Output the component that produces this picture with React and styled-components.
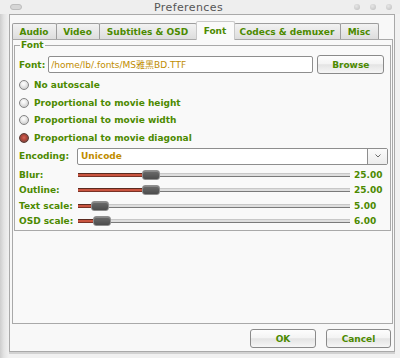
import React from "react"
import styled, { createGlobalStyle } from 'styled-components'

const GREEN = '#4c8a00'
const GOLD = '#c08c00'

const Global = createGlobalStyle`
    body {
        margin: 0;
        font-family: "DejaVu Sans", "Noto Sans CJK SC", sans-serif;
    }
`

const Page = styled.div`
    display: flex;
    flex-direction: column;
    width: 400px;
    height: 358px;
    background: #f1f1f1;
    overflow: hidden;
`

const TitleBar = styled.div`
    display: flex;
    align-items: center;
    height: 14px;
    background: #eeeeee;
`

const Pill = styled.div`
    width: 10px;
    height: 4px;
    margin: 0 1px 1px 10px;
    border: 1px solid #bdbdbd;
    border-radius: 3px;
    background: #d6d6d6;
`

const Title = styled.div`
    flex: 1;
    text-align: center;
    font-size: 11px;
    letter-spacing: 0.4px;
    color: #555;
    padding-top: 1px;
`

const Dots = styled.div`
    display: flex;
    gap: 10px;
    padding-right: 8px;
    margin-bottom: 1px;
`

const Dot = styled.div`
    width: 6px;
    height: 6px;
    border-radius: 50%;
    background: radial-gradient(circle at 40% 35%, #e6e6e6, #bdbdbd);
`

const Body = styled.div`
    display: flex;
    flex: 1;
    background: linear-gradient(to right, #cdcdcd 0, #e4e4e4 4px, #f1f1f1 9px);
`

const Side = styled.div`
    width: ${p => p.w}px;
`

const Window = styled.div`
    display: flex;
    flex-direction: column;
    width: 381px;
    height: 336px;
    border: 1px solid #a9a9a9;
    background: #f8f8f8;
    box-shadow: 0 2px 0 #d2d2d2;
    padding: 0 1px 0 2px;
`

const TabBar = styled.div`
    display: flex;
    align-items: flex-end;
    height: 24px;
`

const Tab = styled.div`
    position: relative;
    display: flex;
    align-items: center;
    justify-content: center;
    box-sizing: border-box;
    width: ${p => p.w}px;
    height: ${p => p.active ? 19 : 16}px;
    padding-right: 1px;
    margin-left: -1px;
    margin-bottom: ${p => p.active ? -1 : 0}px;
    border: 1px solid ${p => p.active ? '#c9c9c9' : '#9d9d9d'};
    border-bottom: none;
    border-radius: 2px 2px 0 0;
    background: ${p => p.active ? '#fafafa' : 'linear-gradient(#f2f2f2, #dddddd)'};
    z-index: ${p => p.active ? 1 : 0};
    font-size: 9px;
    font-weight: bold;
    white-space: nowrap;
    color: ${GREEN};
    &:first-child {
        margin-left: 0;
    }
`

const Panel = styled.div`
    height: 283px;
    border: 1px solid #a9a9a9;
    background: #f9f9f9;
    padding: 0 1px;
`

const Group = styled.fieldset`
    margin: 0;
    padding: 0 2px 0 4px;
    border: 1px solid #a9a9a9;
    min-width: 0;
`

const Legend = styled.legend`
    padding: 0 1px;
    margin-left: 1px;
    font-size: 9px;
    line-height: 10px;
    font-weight: bold;
    color: ${GREEN};
`

const FontRow = styled.div`
    display: flex;
    align-items: center;
    height: 19px;
    margin-top: 5px;
    gap: 3px;
`

const Label = styled.span`
    font-size: 9px;
    font-weight: bold;
    color: ${GREEN};
    white-space: nowrap;
`

const PathInput = styled.input`
    width: 265px;
    height: 17px;
    box-sizing: border-box;
    margin: 0;
    padding: 0 2px;
    border: 1px solid #8e8e8e;
    border-radius: 2px;
    background: #fff;
    font-family: "DejaVu Sans", "Noto Sans CJK SC", sans-serif;
    font-size: 9px;
    color: ${GOLD};
    outline: none;
`

const Button = styled.button`
    width: ${p => p.w}px;
    height: 19px;
    margin: 0;
    padding: 0;
    border: 1px solid #8a8a8a;
    border-radius: 3px;
    background: linear-gradient(#fdfdfd, #f4f4f4 44%, #e4e4e4 52%, #f6f6f6);
    font-family: "DejaVu Sans", sans-serif;
    font-size: 9px;
    font-weight: bold;
    color: ${GREEN};
    margin-left: ${p => p.ml || 0}px;
`

const Radios = styled.div`
    display: flex;
    flex-direction: column;
    margin-top: 2px;
`

const RadioRow = styled.div`
    display: flex;
    align-items: center;
    gap: 5px;
    height: 17.7px;
`

const RadioDot = styled.div`
    width: 10px;
    height: 10px;
    box-sizing: border-box;
    border-radius: 50%;
    border: 1px solid ${p => p.on ? '#5c3a34' : '#858585'};
    background: ${p => p.on
        ? 'radial-gradient(circle at 50% 45%, #d0685a 0, #b4463a 2.5px, #8a4a40 4px)'
        : 'radial-gradient(circle at 45% 35%, #ffffff 0, #f0f0f0 2px, #d2d2d2 5px)'};
`

const Grid = styled.div`
    display: grid;
    grid-template-columns: 58px 1fr 34px;
    grid-template-rows: 19px repeat(4, 15.5px);
    align-items: center;
    margin-top: 1px;
    padding-bottom: 1px;
`

const Combo = styled.div`
    grid-column: 2 / 4;
    display: flex;
    height: 17px;
    box-sizing: border-box;
    border: 1px solid #8e8e8e;
    border-radius: 2px;
    background: #fff;
    align-self: start;
`

const ComboText = styled.div`
    flex: 1;
    display: flex;
    align-items: center;
    padding-left: 3px;
    font-size: 9px;
    font-weight: bold;
    color: ${GOLD};
`

const ComboArrow = styled.div`
    width: 19px;
    display: flex;
    align-items: center;
    justify-content: center;
    border-left: 1px solid #8e8e8e;
    background: linear-gradient(#fbfbfb, #ececec);
`

const EncLabel = styled(Label)`
    align-self: start;
    line-height: 17px;
`

const Track = styled.div`
    position: relative;
    height: 4px;
    margin: 0 4px 0 1px;
    box-sizing: border-box;
    background: #dedede;
    border-bottom: 1px solid #7a7a7a;
    border-top: 1px solid #c8c8c8;
`

const Fill = styled.div`
    position: absolute;
    left: 0;
    top: -1px;
    height: 4px;
    box-sizing: border-box;
    background: #c9543f;
    border-top: 1px solid #5a2a20;
    border-bottom: 1px solid #7a3226;
`

const Handle = styled.div`
    position: absolute;
    top: -4px;
    width: 18px;
    height: 10px;
    box-sizing: border-box;
    border: 1px solid #8f8f8f;
    border-radius: 3px;
    background: linear-gradient(#6c6c6c, #4c4c4c);
    box-shadow: inset 0 1px 0 #888;
`

const Value = styled.span`
    font-size: 9px;
    font-weight: bold;
    color: ${GREEN};
`

const Footer = styled.div`
    display: flex;
    justify-content: flex-end;
    padding: 5px 2px 0 0;
`

const Slider = ({ value }) => {
    const f = value / 100
    return (
        <Track>
            <Fill style={{ width: `calc((100% - 18px) * ${f} + 9px)` }}/>
            <Handle style={{ left: `calc((100% - 18px) * ${f})` }}/>
        </Track>
    )
}

const tabs = [
    { name: 'Audio', w: 45 },
    { name: 'Video', w: 44 },
    { name: 'Subtitles & OSD', w: 98 },
    { name: 'Font', w: 39 },
    { name: 'Codecs & demuxer', w: 107 },
    { name: 'Misc', w: 39 },
]
const radios = ['No autoscale', 'Proportional to movie height', 'Proportional to movie width', 'Proportional to movie diagonal']
const sliders = [
    { label: 'Blur:', value: 25 },
    { label: 'Outline:', value: 25 },
    { label: 'Text scale:', value: 5 },
    { label: 'OSD scale:', value: 6 },
]

const App = () => {
    return (
        <Page>
            <Global/>
            <TitleBar>
                <Pill/>
                <Title>Preferences</Title>
                <Dots><Dot/><Dot/><Dot/></Dots>
            </TitleBar>
            <Body>
                <Side w={9}/>
                <Window>
                    <TabBar>
                        {tabs.map(t => <Tab key={t.name} w={t.w} active={t.name === 'Font'}>{t.name}</Tab>)}
                    </TabBar>
                    <Panel>
                        <Group>
                            <Legend>Font</Legend>
                            <FontRow>
                                <Label>Font:</Label>
                                <PathInput readOnly value="/home/lb/.fonts/MS雅黑BD.TTF"/>
                                <Button w={67} ml={1}>Browse</Button>
                            </FontRow>
                            <Radios>
                                {radios.map((r, i) => (
                                    <RadioRow key={r}>
                                        <RadioDot on={i === 3}/>
                                        <Label>{r}</Label>
                                    </RadioRow>
                                ))}
                            </Radios>
                            <Grid>
                                <EncLabel>Encoding:</EncLabel>
                                <Combo>
                                    <ComboText>Unicode</ComboText>
                                    <ComboArrow>
                                        <svg width="6" height="4" viewBox="0 0 6 4">
                                            <path d="M0.5 0.5 L3 3 L5.5 0.5" fill="none" stroke="#6a6a6a" strokeWidth="1"/>
                                        </svg>
                                    </ComboArrow>
                                </Combo>
                                {sliders.map(s => (
                                    <React.Fragment key={s.label}>
                                        <Label>{s.label}</Label>
                                        <Slider value={s.value}/>
                                        <Value>{s.value.toFixed(2)}</Value>
                                    </React.Fragment>
                                ))}
                            </Grid>
                        </Group>
                    </Panel>
                    <Footer>
                        <Button w={66}>OK</Button>
                        <Button w={65} ml={10}>Cancel</Button>
                    </Footer>
                </Window>
                <Side w={5}/>
            </Body>
        </Page>
    )
}
export default App
